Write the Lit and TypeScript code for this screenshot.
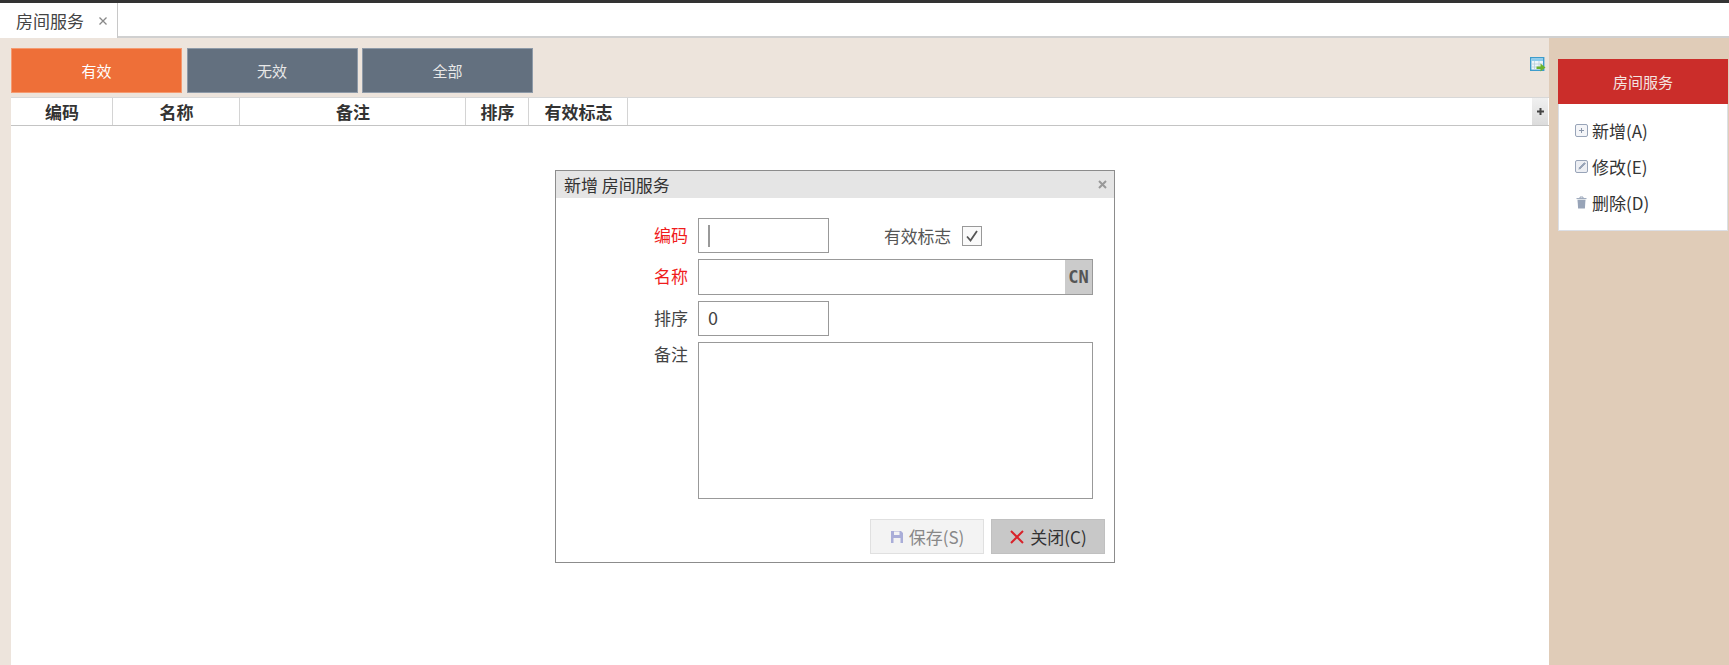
import { LitElement, html, css } from "lit";
import { customElement } from "lit/decorators.js";

@customElement("app-root")
export class AppRoot extends LitElement {
  static styles = css`
    :host { display: block; width: 1729px; height: 665px; overflow: hidden; position: relative;
      font-family: "Noto Sans CJK SC", "Noto Sans", sans-serif; color: #333; background: #fff; }
    .top { height: 3px; background: #333; }
    .tabs { height: 33px; display: flex; background: #fff; border-bottom: 2px solid #d0d0d0; }
    .tab { width: 118px; height: 35px; box-sizing: border-box; border-right: 1px solid #c8c8c8; background: #fff;
      display: flex; align-items: center; padding-left: 16px; gap: 14px; font-size: 17px; color: #444; }
    .tab svg { display: block; }
    .main { display: flex; height: 627px; }
    .left { width: 1549px; background: #ede4dc; padding: 10px 0 0 11px; box-sizing: border-box; display: flex; flex-direction: column; }
    .filters { display: flex; gap: 4.5px; height: 45px; position: relative; flex: none; }
    .fbtn { width: 171px; box-sizing: border-box; border: 1px solid #8e9aa8; background: #63707f; color: #e8e8e8; font-size: 15px;
      display: flex; align-items: center; justify-content: center; }
    .fbtn.on { background: #ee6f38; border-color: #f59a70; color: #fff; }
    .export { position: absolute; right: 3px; top: 9px; }
    .grid { margin-top: 4px; flex: 1; background: #fff; }
    .head { height: 29px; display: flex; box-sizing: border-box; border-top: 1px solid #d8d8d8; border-bottom: 1px solid #c4c4c4; }
    .th { box-sizing: border-box; border-right: 1px solid #d4d4d4; font-size: 17px; font-weight: 700; color: #333;
      display: flex; align-items: center; justify-content: center; padding-left: 1px; }
    .sp { flex: 1; }
    .plus { width: 16px; margin-right: 1px; background: linear-gradient(#f0f0f0, #dcdcdc); display: flex; align-items: center; justify-content: center; }
    .right { flex: 1; background: #e0ccb8; padding: 21px 1px 0 9px; box-sizing: border-box; }
    .card { background: #fff; border: 1px solid #dcdfe6; border-top: 0; height: 172px; box-sizing: border-box; }
    .card h2 { margin: 0 -1px; height: 45px; background: #cb2d2a; color: #f4e4e0; font-size: 15px; font-weight: 400;
      display: flex; align-items: center; justify-content: center; }
    .menu { padding: 8px 0 0 16px; display: flex; flex-direction: column; }
    .mi { height: 36px; display: flex; align-items: center; gap: 4px; font-size: 17px; color: #333; }
    .mi svg { flex: none; }
    .dlg { position: absolute; left: 555px; top: 170px; width: 560px; height: 393px; box-sizing: border-box; background: #fff;
      border: 1px solid #8c8c8c; display: flex; flex-direction: column; }
    .dlg header { height: 27px; background: #e5e5e5; flex: none; display: flex; align-items: center; justify-content: space-between;
      padding: 0 7px 0 8px; font-size: 17px; color: #333; }
    .form { display: grid; grid-template-columns: 131px 131px 1fr; grid-template-rows: 35px 36px 35px 157px; row-gap: 6px; column-gap: 10px;
      padding: 20px 21px 0 1px; margin-left: 0; }
    .form label { text-align: right; font-size: 17px; color: #444; line-height: 34px; }
    .form label.req { color: #f01c1c; }
    .in { border: 1px solid #999; box-sizing: border-box; background: #fff; font-size: 18px; color: #444; padding: 0 0 3px 9px; display: flex; align-items: center; }
    .caret { width: 2px; height: 22px; margin-top: 3px; background: #999; }
    .wide { grid-column: 2 / 4; }
    .name { padding: 0; justify-content: flex-end; }
    .cn { width: 27px; height: 100%; background: #cbcbcb; color: #555; font-family: "DejaVu Sans Mono", monospace; font-size: 17px; font-weight: 700;
      display: flex; align-items: center; justify-content: center; }
    .flag { display: flex; align-items: center; gap: 11px; padding-left: 45px; font-size: 16.8px; color: #555; height: 35px; }
    .check { width: 20px; height: 20px; box-sizing: border-box; border: 1px solid #999; background: #fafafa; display: flex; align-items: center; justify-content: center; }
    .memo-l { align-self: start; line-height: 24px !important; }
    .foot { display: flex; justify-content: flex-end; gap: 7px; padding: 20px 9px 0 0; }
    .btn { width: 114px; height: 35px; box-sizing: border-box; display: flex; align-items: center; justify-content: center; gap: 5px; font-size: 17px; }
    .save { background: #f3f3f3; border: 1px solid #e0e0e0; color: #888; }
    .close { background: #c8c8c8; border: 1px solid #c0c0c0; color: #333; }
  `;

  render() {
    const heads: [string, number][] = [["编码", 102], ["名称", 127], ["备注", 226], ["排序", 63], ["有效标志", 99]];
    return html`
      <div class="top"></div>
      <div class="tabs">
        <div class="tab">房间服务
          <svg width="10" height="10" viewBox="0 0 10 10"><path d="M1.500 1.500l7 7M8.500 1.500l-7 7" stroke="#888" stroke-width="1.300"/></svg>
        </div>
      </div>
      <div class="main">
        <div class="left">
          <div class="filters">
            <div class="fbtn on">有效</div><div class="fbtn">无效</div><div class="fbtn">全部</div>
            <svg class="export" width="16" height="16" viewBox="0 0 16 16">
              <rect x=".7" y=".7" width="13" height="12.600" fill="#eef6fb" stroke="#3d9ccc" stroke-width="1.400"/>
              <rect x="1.400" y="1.400" width="11.600" height="2.600" fill="#8ccbec"/>
              <path d="M4.500 4v9M9 4v9M1 7h12M1 10h12" stroke="#b8cfdc" stroke-width=".8"/>
              <path d="M6.500 9.500h4V6.500l5 4-5 4V12H6.500z" fill="#6cb32a"/>
            </svg>
          </div>
          <div class="grid">
            <div class="head">
              ${heads.map(([t, w]) => html`<div class="th" style="width:${w}px">${t}</div>`)}
              <div class="sp"></div>
              <div class="plus"><svg width="7" height="7" viewBox="0 0 7 7"><path d="M0 3.500h7M3.500 0v7" stroke="#444" stroke-width="2"/></svg></div>
            </div>
          </div>
        </div>
        <div class="right">
          <div class="card">
            <h2>房间服务</h2>
            <div class="menu">
              <div class="mi">
                <svg width="13" height="13" viewBox="0 0 13 13"><rect x=".5" y=".5" width="12" height="12" rx="1.500" fill="#f4f5f8" stroke="#98a4b8"/><path d="M4 6.500h5M6.500 4v5" stroke="#8a96aa"/></svg>新增(A)</div>
              <div class="mi">
                <svg width="13" height="13" viewBox="0 0 13 13"><rect x=".5" y=".5" width="12" height="12" rx="1.500" fill="#eceef3" stroke="#98a4b8"/><path d="M2.800 10.200l.7-2.700L9.300 1.700l2 2-5.800 5.800z" fill="#98a4b8" stroke="#fff" stroke-width=".7"/></svg>修改(E)</div>
              <div class="mi">
                <svg width="13" height="13" viewBox="0 0 13 13"><path d="M2.500 3.800h8l-.6 8.700H3.100z" fill="#98a4b8"/><path d="M1.500 2.600h10M5 2.300V1h3v1.300" stroke="#98a4b8" fill="none"/></svg>删除(D)</div>
            </div>
          </div>
        </div>
      </div>
      <div class="dlg">
        <header><span>新增 房间服务</span>
          <svg width="9" height="9" viewBox="0 0 9 9"><path d="M1 1l7 7M8 1L1 8" stroke="#999" stroke-width="2"/></svg>
        </header>
        <div class="form">
          <label class="req">编码</label>
          <div class="in"><span class="caret"></span></div>
          <div class="flag">有效标志
            <span class="check"><svg width="14" height="14" viewBox="0 0 14 14"><path d="M2 7.500l3.500 4L12 2" fill="none" stroke="#555" stroke-width="1.800"/></svg></span>
          </div>
          <label class="req">名称</label>
          <div class="in wide name"><span class="cn">CN</span></div>
          <label>排序</label>
          <div class="in">0</div>
          <span></span>
          <label class="memo-l">备注</label>
          <div class="in wide"></div>
        </div>
        <div class="foot">
          <div class="btn save">
            <svg width="14" height="14" viewBox="0 0 14 14"><path d="M1 1h10l2 2v10H1z" fill="#a9add8"/><rect x="4" y="1.500" width="5.500" height="3.500" fill="#f3f3f3"/><rect x="3.500" y="8" width="7" height="5" fill="#f3f3f3"/></svg>保存(S)</div>
          <div class="btn close">
            <svg width="16" height="16" viewBox="0 0 16 16"><path d="M2 2l12 12M14 2L2 14" stroke="#d8222a" stroke-width="2"/></svg>关闭(C)</div>
        </div>
      </div>
    `;
  }
}
